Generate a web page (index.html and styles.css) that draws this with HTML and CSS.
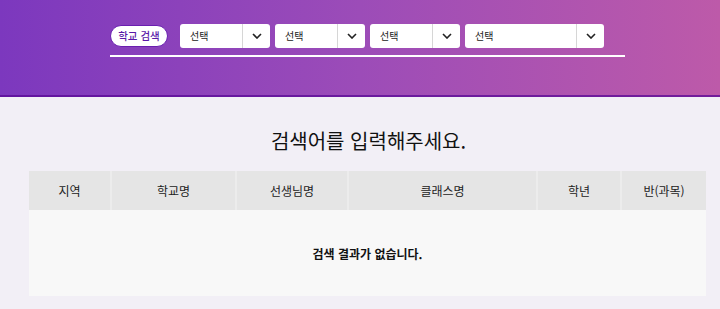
FILE: index.html
```html
<!DOCTYPE html>
<html lang="ko">
<head>
<meta charset="utf-8">
<link rel="stylesheet" href="styles.css">
</head>
<body>
<header class="top">
  <div class="search">
    <div class="bar">
      <button class="btn">학교 검색</button>
      <div class="sel w1"><span class="val">선택</span><span class="arr"><svg width="10" height="6" viewBox="0 0 10 6"><path d="M1 1l4 4 4-4" fill="none" stroke="#222" stroke-width="1.6"/></svg></span></div>
      <div class="sel w1"><span class="val">선택</span><span class="arr"><svg width="10" height="6" viewBox="0 0 10 6"><path d="M1 1l4 4 4-4" fill="none" stroke="#222" stroke-width="1.6"/></svg></span></div>
      <div class="sel w1"><span class="val">선택</span><span class="arr"><svg width="10" height="6" viewBox="0 0 10 6"><path d="M1 1l4 4 4-4" fill="none" stroke="#222" stroke-width="1.6"/></svg></span></div>
      <div class="sel w2"><span class="val">선택</span><span class="arr"><svg width="10" height="6" viewBox="0 0 10 6"><path d="M1 1l4 4 4-4" fill="none" stroke="#222" stroke-width="1.6"/></svg></span></div>
    </div>
    <div class="line"></div>
  </div>
</header>
<main class="content">
  <h1 class="title">검색어를 입력해주세요.</h1>
  <div class="table">
    <div class="thead">
      <div class="th c1">지역</div>
      <div class="th c2">학교명</div>
      <div class="th c3">선생님명</div>
      <div class="th c4">클래스명</div>
      <div class="th c5">학년</div>
      <div class="th c6">반(과목)</div>
    </div>
    <div class="empty">검색 결과가 없습니다.</div>
  </div>
</main>
</body>
</html>
```
FILE: styles.css
```css
* { box-sizing: border-box; }
html, body { margin: 0; padding: 0; }
body {
  width: 720px;
  height: 309px;
  overflow: hidden;
  background: #f2eff6;
  font-family: "Noto Sans CJK KR", "Noto Sans", sans-serif;
  color: #111;
}
.top {
  height: 97px;
  background: linear-gradient(90deg, #7c38be 0%, #9c4cb8 50%, #bd5aa9 100%);
  border-bottom: 2px solid rgba(90, 10, 150, 0.75);
  padding-top: 24px;
}
.search {
  width: 515px;
  margin-left: 110px;
}
.bar {
  display: flex;
  align-items: center;
  height: 24px;
}
.btn {
  width: 58px;
  height: 22px;
  border: 1px solid #6a1fb0;
  border-radius: 11px;
  background: #fff;
  color: #5a18a8;
  font-family: "Noto Sans CJK KR", sans-serif;
  font-size: 10.5px;
  font-weight: 500;
  padding: 0;
  margin-right: 12px;
  line-height: 20px;
}
.sel {
  display: flex;
  height: 24px;
  background: #fff;
  border-radius: 3px;
  margin-right: 5px;
  font-size: 10px;
  color: #222;
}
.w1 { width: 90px; }
.w2 { width: 139px; }
.val {
  flex: 1;
  padding-left: 10px;
  line-height: 24px;
}
.arr {
  width: 28px;
  border-left: 1px solid #d6d6d6;
  display: flex;
  align-items: center;
  justify-content: center;
}
.line {
  margin-top: 7px;
  height: 2px;
  background: #fff;
}
.content {
  padding: 0 14px 0 29px;
}
.title {
  margin: 27px 0 0;
  text-align: center;
  font-size: 20px;
  font-weight: 400;
  line-height: 34px;
  color: #111;
  padding-left: 2px;
}
.table {
  margin-top: 13px;
  width: 677px;
}
.thead {
  display: flex;
  height: 39px;
  background: #e5e5e5;
}
.th {
  display: flex;
  align-items: center;
  justify-content: center;
  font-size: 12px;
  color: #222;
  border-right: 2px solid #ececec;
}
.th:last-child { border-right: none; }
.c1 { width: 83px; }
.c2 { width: 125px; }
.c3 { width: 112px; }
.c4 { width: 189px; }
.c5 { width: 84px; }
.c6 { flex: 1; }
.empty {
  height: 86px;
  background: #f8f8f8;
  display: flex;
  align-items: center;
  justify-content: center;
  font-size: 12px;
  font-weight: 700;
  color: #111;
}
```
